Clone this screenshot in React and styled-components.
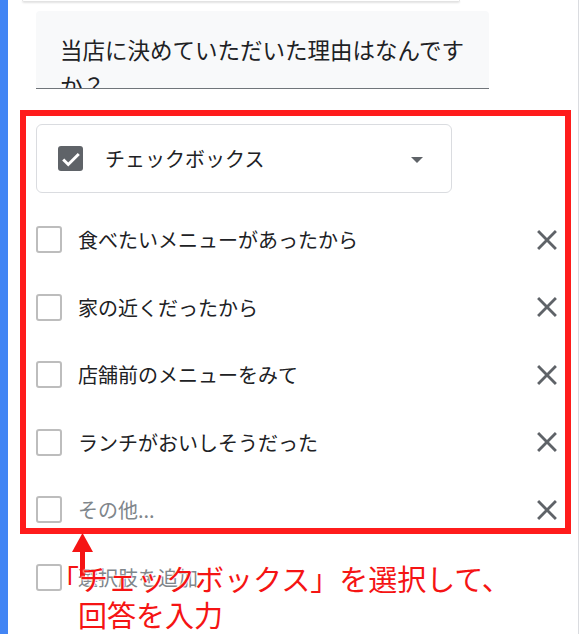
import React from "react";
import styled, { createGlobalStyle } from "styled-components";

const GlobalStyle = createGlobalStyle`
  html, body {
    margin: 0;
    padding: 0;
    background: #fff;
  }
  body {
    font-family: Roboto, "Noto Sans CJK JP", sans-serif;
    color: #202124;
  }
`;

const Page = styled.div`
  position: relative;
  width: 580px;
  height: 634px;
  overflow: hidden;
  background: #fff;
`;

const Card = styled.div`
  box-sizing: border-box;
  width: 579px;
  height: 634px;
  border-left: 8px solid #4285f4;
  border-right: 1px solid #dadce0;
  background: #fff;
`;

const PrevBlock = styled.div`
  width: 436px;
  height: 1px;
  margin-left: 14px;
  border: 1px solid #e3e3e3;
  border-top: none;
  border-radius: 0 0 4px 4px;
  box-shadow: 0 1px 2px rgba(0, 0, 0, 0.12);
`;

const TitleField = styled.div`
  box-sizing: border-box;
  width: 453px;
  height: 78px;
  margin: 9px 0 0 28px;
  padding: 20px 24px 0 24px;
  background: #f8f9fa;
  border-bottom: 1px solid #70757a;
  border-radius: 4px 4px 0 0;
  overflow: hidden;
  font-family: "Noto Sans CJK JP", sans-serif;
  font-size: 22.5px;
  line-height: 36px;
  color: #202124;
`;

// annotation highlight around the type picker and the options
const Highlight = styled.div`
  box-sizing: border-box;
  width: 551px;
  margin: 21px 0 0 12px;
  padding: 8px 0 0.5px 10px;
  border: 6px solid #ff1c1c;
`;

const TypeSelect = styled.div`
  box-sizing: border-box;
  width: 416px;
  height: 69px;
  display: flex;
  align-items: center;
  padding: 0 28px 0 21px;
  border: 1px solid #dadce0;
  border-radius: 6px;
`;

const CheckedBox = styled.span`
  width: 25px;
  height: 25px;
  border-radius: 3px;
  background: #5f6368;
  display: flex;
  align-items: center;
  justify-content: center;
  flex-shrink: 0;
`;

const TypeLabel = styled.span`
  flex: 1;
  margin-left: 22px;
  font-family: "Noto Sans CJK JP", sans-serif;
  font-size: 20px;
  color: #202124;
`;

const Caret = styled.span`
  width: 0;
  height: 0;
  border-left: 6px solid transparent;
  border-right: 6px solid transparent;
  border-top: 6px solid #5f6368;
  margin-top: 3px;
`;

const OptionList = styled.div`
  display: flex;
  flex-direction: column;
  gap: 31.5px;
  margin-top: 28.5px;
`;

const OptionRow = styled.div`
  height: 36px;
  display: flex;
  align-items: center;
  margin-left: ${(p) => p.$indent || 0}px;
`;

const Box = styled.span`
  box-sizing: border-box;
  width: 26px;
  height: 27px;
  border: 2px solid #bdbdbd;
  border-radius: 3px;
  flex-shrink: 0;
`;

const OptionText = styled.span`
  flex: 1;
  margin-left: 16px;
  font-family: "Noto Sans CJK JP", sans-serif;
  font-size: 20px;
  color: ${(p) => (p.$muted ? "#80868b" : "#202124")};
`;

const RemoveButton = styled.span`
  width: 34px;
  height: 34px;
  display: flex;
  align-items: center;
  justify-content: center;
  margin-right: 1px;
`;

const Arrow = styled.svg`
  position: absolute;
  left: 71px;
  top: 532px;
`;

const Callout = styled.div`
  position: absolute;
  left: 50px;
  top: 560px;
  font-family: "Noto Sans CJK JP", sans-serif;
  font-size: 29px;
  line-height: 36px;
  color: #f51414;
  white-space: nowrap;
  text-shadow: 0 0 2px #fff, 0 0 2px #fff, 0 0 2px #fff;
`;

const CalloutLine = styled.div`
  padding-left: ${(p) => p.$indent || 0}px;
`;

const CloseIcon = () => (
  <svg width="34" height="34" viewBox="0 0 24 24">
    <path
      fill="#5f6368"
      d="M19 6.41L17.59 5 12 10.59 6.41 5 5 6.41 10.59 12 5 17.59 6.41 19 12 13.41 17.59 19 19 17.59 13.41 12z"
    />
  </svg>
);

const options = [
  "食べたいメニューがあったから",
  "家の近くだったから",
  "店舗前のメニューをみて",
  "ランチがおいしそうだった",
];

export default function App() {
  return (
    <Page>
      <GlobalStyle />
      <Card>
        <PrevBlock />
        <TitleField>当店に決めていただいた理由はなんですか？</TitleField>
        <Highlight>
          <TypeSelect>
            <CheckedBox>
              <svg width="22" height="22" viewBox="0 0 24 24">
                <path
                  fill="none"
                  stroke="#fff"
                  strokeWidth="3.2"
                  d="M3.5 12.5l5.5 5.5L20.5 6.5"
                />
              </svg>
            </CheckedBox>
            <TypeLabel>チェックボックス</TypeLabel>
            <Caret />
          </TypeSelect>
          <OptionList>
            {options.map((label) => (
              <OptionRow key={label}>
                <Box />
                <OptionText>{label}</OptionText>
                <RemoveButton>
                  <CloseIcon />
                </RemoveButton>
              </OptionRow>
            ))}
            <OptionRow>
              <Box />
              <OptionText $muted>その他...</OptionText>
              <RemoveButton>
                <CloseIcon />
              </RemoveButton>
            </OptionRow>
          </OptionList>
        </Highlight>
        <OptionRow $indent={28} style={{ marginTop: 25 }}>
          <Box />
          <OptionText $muted>選択肢を追加</OptionText>
        </OptionRow>
      </Card>
      <Arrow width="23" height="46" viewBox="0 0 23 46">
        <polygon points="11.5,1 1,20 22,20" fill="#f51414" />
        <rect x="9" y="19" width="5" height="27" fill="#f51414" />
      </Arrow>
      <Callout>
        <CalloutLine>「チェックボックス」を選択して、</CalloutLine>
        <CalloutLine $indent={28}>回答を入力</CalloutLine>
      </Callout>
    </Page>
  );
}
